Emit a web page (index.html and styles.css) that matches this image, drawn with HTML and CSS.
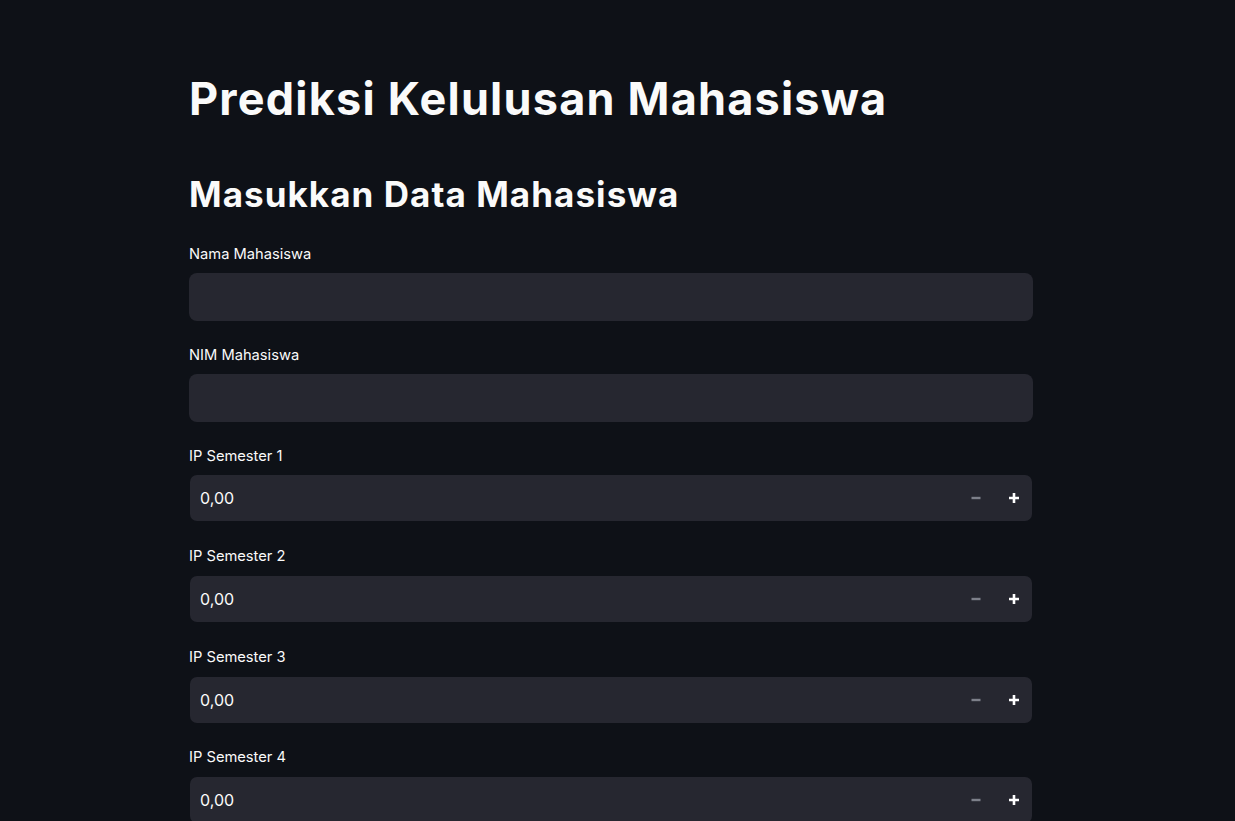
FILE: index.html
```html
<!DOCTYPE html>
<html lang="id">
<head>
<meta charset="utf-8">
<title>Prediksi Kelulusan Mahasiswa</title>
<link rel="stylesheet" href="styles.css">
</head>
<body>
<main class="main">
  <h1 class="title">Prediksi Kelulusan Mahasiswa</h1>
  <h2 class="subtitle">Masukkan Data Mahasiswa</h2>

  <div class="field">
    <label class="label">Nama Mahasiswa</label>
    <div class="text-input"></div>
  </div>
  <div class="field">
    <label class="label">NIM Mahasiswa</label>
    <div class="text-input"></div>
  </div>

  <div class="field">
    <label class="label">IP Semester 1</label>
    <div class="number-input">
      <span class="value">0,00</span>
      <span class="step minus"><svg width="10" height="10" viewBox="0 0 10 10"><path d="M0.5 5H9.5" stroke="currentColor" stroke-width="2.4"/></svg></span>
      <span class="step plus"><svg width="10" height="10" viewBox="0 0 10 10"><path d="M0 5H10M5 0V10" stroke="currentColor" stroke-width="2.6"/></svg></span>
    </div>
  </div>
  <div class="field">
    <label class="label">IP Semester 2</label>
    <div class="number-input">
      <span class="value">0,00</span>
      <span class="step minus"><svg width="10" height="10" viewBox="0 0 10 10"><path d="M0.5 5H9.5" stroke="currentColor" stroke-width="2.4"/></svg></span>
      <span class="step plus"><svg width="10" height="10" viewBox="0 0 10 10"><path d="M0 5H10M5 0V10" stroke="currentColor" stroke-width="2.6"/></svg></span>
    </div>
  </div>
  <div class="field">
    <label class="label">IP Semester 3</label>
    <div class="number-input">
      <span class="value">0,00</span>
      <span class="step minus"><svg width="10" height="10" viewBox="0 0 10 10"><path d="M0.5 5H9.5" stroke="currentColor" stroke-width="2.4"/></svg></span>
      <span class="step plus"><svg width="10" height="10" viewBox="0 0 10 10"><path d="M0 5H10M5 0V10" stroke="currentColor" stroke-width="2.6"/></svg></span>
    </div>
  </div>
  <div class="field">
    <label class="label">IP Semester 4</label>
    <div class="number-input">
      <span class="value">0,00</span>
      <span class="step minus"><svg width="10" height="10" viewBox="0 0 10 10"><path d="M0.5 5H9.5" stroke="currentColor" stroke-width="2.4"/></svg></span>
      <span class="step plus"><svg width="10" height="10" viewBox="0 0 10 10"><path d="M0 5H10M5 0V10" stroke="currentColor" stroke-width="2.6"/></svg></span>
    </div>
  </div>
</main>
</body>
</html>
```
FILE: styles.css
```css
html, body {
  margin: 0;
  padding: 0;
  background: #0e1117;
  color: #fafafa;
  font-family: Inter, "Noto Sans", sans-serif;
  overflow: hidden;
}

.main {
  width: 844px;
  margin-left: 189px;
  padding-top: 70.6px;
  display: flex;
  flex-direction: column;
}

.title {
  margin: 0;
  font-size: 45px;
  line-height: 56px;
  font-weight: 700;
  letter-spacing: 1.2px;
}

.subtitle {
  margin: 47.5px 0 0;
  font-size: 35px;
  line-height: 40px;
  font-weight: 700;
  letter-spacing: 1.05px;
}

.field {
  display: flex;
  flex-direction: column;
}

.subtitle + .field {
  margin-top: 29.1px;
}

.field + .field {
  margin-top: 22.87px;
}

.label {
  font-size: 14.7px;
  line-height: 20px;
  padding-top: 1px;
  margin-bottom: 8.8px;
}

.text-input {
  height: 48px;
  box-sizing: border-box;
  background: #262730;
  border-radius: 8px;
}

.number-input {
  height: 48px;
  box-sizing: border-box;
  border: 1px solid transparent;
  background: #262730;
  background-clip: padding-box;
  border-radius: 8px;
  display: flex;
  align-items: center;
  padding-left: 10px;
}

.value {
  flex: 1;
  font-size: 16px;
}

.step {
  height: 46px;
  display: flex;
  align-items: center;
  justify-content: center;
}

.minus {
  width: 41px;
  color: #7d808a;
}

.plus {
  width: 36px;
  color: #ffffff;
}
```
